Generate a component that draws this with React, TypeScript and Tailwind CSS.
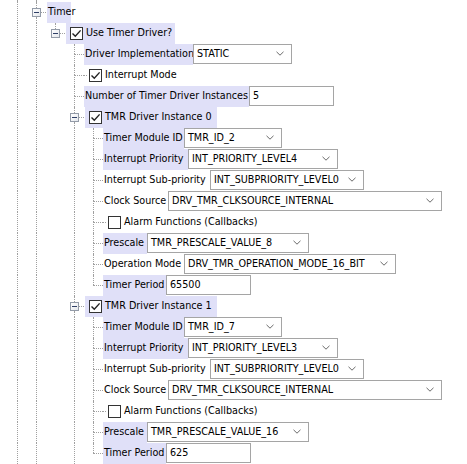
import React from "react";

type Guide = "" | "L" | "T" | "E" | "XB" | "XA";

const DOT = "border-dotted border-[#a0a0a0]";

function GuideCell({ g }: { g: Guide }) {
  if (g === "L")
    return (
      <div className="w-[19px] shrink-0 flex">
        <div className={`ml-[9px] border-l ${DOT}`} />
      </div>
    );
  if (g === "T" || g === "E")
    return (
      <div className="w-[19px] shrink-0 flex flex-col">
        <div className={`ml-[9px] h-[10px] border-l ${DOT}`} />
        <div className={`ml-[9px] flex-1 border-t ${g === "T" ? "border-l" : ""} ${DOT}`} />
      </div>
    );
  if (g === "XB" || g === "XA")
    return (
      <div className="w-[19px] shrink-0 flex flex-col">
        <div className={`ml-[9px] h-[6px] border-l ${DOT}`} />
        <div className="flex items-center h-[9px]">
          <div className="ml-[5px] w-[9px] h-[9px] shrink-0 border border-[#939ba8] bg-gradient-to-br from-white to-[#e4e7ec] flex items-center justify-center">
            <div className="w-[5px] h-px bg-[#2f3f66]" />
          </div>
          <div className={`flex-1 h-0 border-t ${DOT}`} />
        </div>
        <div className={`ml-[9px] flex-1 ${g === "XB" ? "border-l" : ""} ${DOT}`} />
      </div>
    );
  return <div className="w-[19px] shrink-0" />;
}

function Check({ on }: { on: boolean }) {
  return (
    <div className="w-[13px] h-[13px] shrink-0 border border-[#333333] bg-white flex items-center justify-center">
      {on && (
        <svg width="11" height="11" viewBox="0 0 11 11">
          <path d="M1.5 5.5 L4.3 8.3 L9.6 2.4" fill="none" stroke="#222222" strokeWidth="1.4" />
        </svg>
      )}
    </div>
  );
}

function Chevron() {
  return (
    <svg width="8" height="5" viewBox="0 0 8 5" className="shrink-0 -mt-[2px]">
      <path d="M0.5 0.8 L4 4.2 L7.5 0.8" fill="none" stroke="#6a6a6a" strokeWidth="1" />
    </svg>
  );
}

function Select({ value, className }: { value: string; className: string }) {
  return (
    <div className={`h-[20px] self-start shrink-0 border border-[#a5a5a5] bg-white flex items-center justify-between pl-[3px] pr-[7px] ${className}`}>
      <span>{value}</span>
      <Chevron />
    </div>
  );
}

function TextBox({ value, className }: { value: string; className: string }) {
  return (
    <div className={`h-[20px] self-start shrink-0 border border-[#a5a5a5] bg-white flex items-center pl-[3px] ${className}`}>
      {value}
    </div>
  );
}

function Label({ text, hl, className }: { text: string; hl: boolean; className: string }) {
  return (
    <div className={`h-full shrink-0 flex items-center pl-[1px] ${hl ? "bg-[#e0e0f8]" : ""} ${className}`}>
      {text}
    </div>
  );
}

function CheckLeaf({ text, on }: { text: string; on: boolean }) {
  return (
    <div className="h-full flex items-center">
      <div className={`w-[3px] h-0 border-t ${DOT}`} />
      <div className="ml-[2px]">
        <Check on={on} />
      </div>
      <span className="ml-[3px]">{text}</span>
    </div>
  );
}

function CheckNode({ text, className }: { text: string; className: string }) {
  return (
    <div className={`h-full ml-[1px] pl-[4px] flex items-center bg-[#e0e0f8] ${className}`}>
      <Check on />
      <span className="ml-[3px]">{text}</span>
    </div>
  );
}

function Row({ guides, children }: { guides: Guide[]; children?: React.ReactNode }) {
  return (
    <div className="flex h-[21px] pl-[8px]">
      {guides.map((g, i) => (
        <GuideCell key={i} g={g} />
      ))}
      {children}
    </div>
  );
}

const inst: Guide[] = ["L", "L", "", "L", "T"];
const instLast: Guide[] = ["L", "L", "", "L", "E"];
const top: Guide[] = ["L", "L", "", "T"];

function Instance({ n, id, prio, prescale, period, op }: { n: number; id: string; prio: string; prescale: string; period: string; op: boolean }) {
  return (
    <>
      <Row guides={["L", "L", "", "XB"]}>
        <CheckNode text={`TMR Driver Instance ${n}`} className="w-[132px]" />
      </Row>
      <Row guides={inst}>
        <Label text="Timer Module ID" hl className="w-[81px]" />
        <Select value={id} className="w-[98px]" />
      </Row>
      <Row guides={inst}>
        <Label text="Interrupt Priority" hl className="w-[85px]" />
        <Select value={prio} className="w-[150px]" />
      </Row>
      <Row guides={inst}>
        <Label text="Interrupt Sub-priority" hl={false} className="w-[107px]" />
        <Select value="INT_SUBPRIORITY_LEVEL0" className="w-[154px]" />
      </Row>
      <Row guides={inst}>
        <Label text="Clock Source" hl={false} className="w-[65px]" />
        <Select value="DRV_TMR_CLKSOURCE_INTERNAL" className="w-[274px]" />
      </Row>
      <Row guides={inst}>
        <CheckLeaf text="Alarm Functions (Callbacks)" on={false} />
      </Row>
      <Row guides={inst}>
        <Label text="Prescale" hl className="w-[44px]" />
        <Select value={prescale} className="w-[162px]" />
      </Row>
      {op && (
        <Row guides={inst}>
          <Label text="Operation Mode" hl={false} className="w-[81px]" />
          <Select value="DRV_TMR_OPERATION_MODE_16_BIT" className="w-[212px]" />
        </Row>
      )}
      <Row guides={instLast}>
        <Label text="Timer Period" hl className="w-[63px]" />
        <TextBox value={period} className="w-[85px]" />
      </Row>
    </>
  );
}

export default function App() {
  return (
    <div className="w-[467px] h-[464px] overflow-hidden bg-white text-black text-[10.7px] font-['DejaVu_Sans_Condensed','DejaVu_Sans',sans-serif] whitespace-nowrap">
      <div className="flex h-[2px] pl-[8px]">
        <GuideCell g="L" />
        <GuideCell g="L" />
      </div>
      <Row guides={["L", "XB"]}>
        <div className="h-full ml-[1px] pl-[1px] w-[24px] flex items-center bg-[#e0e0f8]">Timer</div>
      </Row>
      <Row guides={["L", "L", "XA"]}>
        <CheckNode text="Use Timer Driver?" className="w-[109px]" />
      </Row>
      <Row guides={top}>
        <Label text="Driver Implementation" hl className="w-[109px]" />
        <Select value="STATIC" className="w-[99px]" />
      </Row>
      <Row guides={top}>
        <CheckLeaf text="Interrupt Mode" on />
      </Row>
      <Row guides={top}>
        <Label text="Number of Timer Driver Instances" hl className="w-[165px]" />
        <TextBox value="5" className="w-[85px]" />
      </Row>
      <Instance n={0} id="TMR_ID_2" prio="INT_PRIORITY_LEVEL4" prescale="TMR_PRESCALE_VALUE_8" period="65500" op />
      <Instance n={1} id="TMR_ID_7" prio="INT_PRIORITY_LEVEL3" prescale="TMR_PRESCALE_VALUE_16" period="625" op={false} />
    </div>
  );
}
